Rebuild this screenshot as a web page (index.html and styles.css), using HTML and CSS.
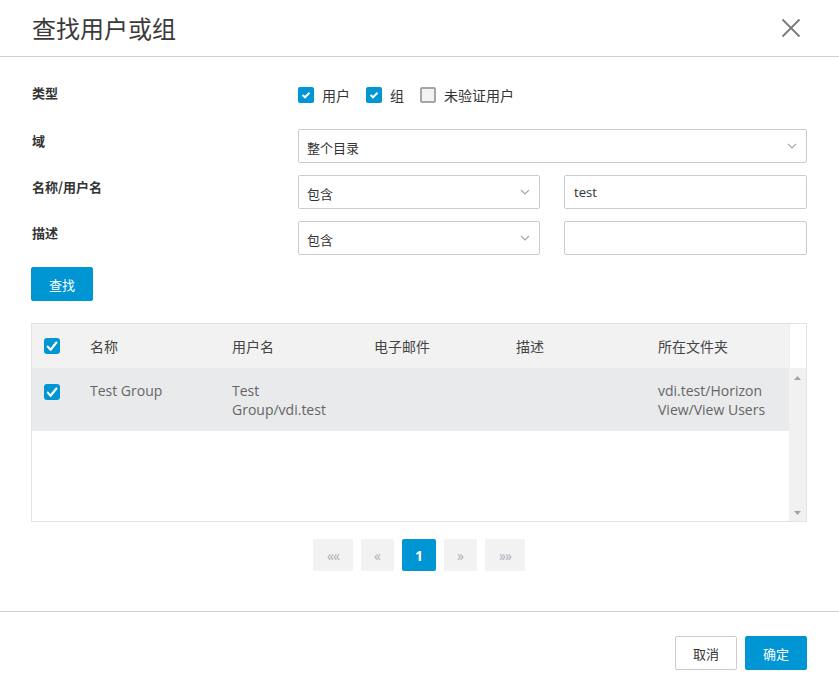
FILE: index.html
```html
<!DOCTYPE html>
<html lang="zh">
<head>
<meta charset="utf-8">
<link rel="stylesheet" href="styles.css">
</head>
<body>
<div class="dialog">
  <div class="header">
    <h1 class="title">查找用户或组</h1>
    <svg class="close" width="20" height="20" viewBox="0 0 20 20"><path d="M1.5 1.5 L18.5 18.5 M18.5 1.5 L1.5 18.5" stroke="#7a7a7a" stroke-width="1.8" fill="none"/></svg>
  </div>
  <div class="body">
    <div class="form">
      <div class="row row-type">
        <div class="label">类型</div>
        <div class="control checks">
          <label class="check"><span class="box on"><svg width="10" height="8" viewBox="0 0 10 8"><path d="M1.5 4 L4 6.3 L8.5 1.8" stroke="#fff" stroke-width="2" fill="none"/></svg></span>用户</label>
          <label class="check"><span class="box on"><svg width="10" height="8" viewBox="0 0 10 8"><path d="M1.5 4 L4 6.3 L8.5 1.8" stroke="#fff" stroke-width="2" fill="none"/></svg></span>组</label>
          <label class="check"><span class="box off"></span>未验证用户</label>
        </div>
      </div>
      <div class="row">
        <div class="label">域</div>
        <div class="control">
          <div class="select full"><span>整个目录</span><svg width="10" height="6" viewBox="0 0 10 6"><path d="M1 1 L5 5 L9 1" stroke="#a0a8b4" stroke-width="1.2" fill="none"/></svg></div>
        </div>
      </div>
      <div class="row">
        <div class="label">名称/用户名</div>
        <div class="control pair">
          <div class="select"><span>包含</span><svg width="10" height="6" viewBox="0 0 10 6"><path d="M1 1 L5 5 L9 1" stroke="#a0a8b4" stroke-width="1.2" fill="none"/></svg></div>
          <div class="input">test</div>
        </div>
      </div>
      <div class="row">
        <div class="label">描述</div>
        <div class="control pair">
          <div class="select"><span>包含</span><svg width="10" height="6" viewBox="0 0 10 6"><path d="M1 1 L5 5 L9 1" stroke="#a0a8b4" stroke-width="1.2" fill="none"/></svg></div>
          <div class="input"></div>
        </div>
      </div>
    </div>
    <button class="btn primary find">查找</button>

    <div class="table">
      <div class="thead">
        <div class="tr">
          <div class="cell chk"><span class="tbox"><svg width="12" height="11" viewBox="0 0 12 11"><path d="M1.8 5.6 L4.6 8.8 L10.4 1.5" stroke="#fff" stroke-width="2.2" fill="none" stroke-linecap="round" stroke-linejoin="round"/></svg></span></div>
          <div class="cell">名称</div>
          <div class="cell">用户名</div>
          <div class="cell">电子邮件</div>
          <div class="cell">描述</div>
          <div class="cell">所在文件夹</div>
        </div>
        <div class="sb-head"></div>
      </div>
      <div class="tbody">
        <div class="rows">
          <div class="tr data">
            <div class="cell chk"><span class="tbox"><svg width="12" height="11" viewBox="0 0 12 11"><path d="M1.8 5.6 L4.6 8.8 L10.4 1.5" stroke="#fff" stroke-width="2.2" fill="none" stroke-linecap="round" stroke-linejoin="round"/></svg></span></div>
            <div class="cell">Test Group</div>
            <div class="cell">Test<br>Group/vdi.test</div>
            <div class="cell"></div>
            <div class="cell"></div>
            <div class="cell">vdi.test/Horizon<br>View/View Users</div>
          </div>
        </div>
        <div class="scrollbar">
          <svg width="7" height="4" viewBox="0 0 7 4"><path d="M0 4 L3.5 0 L7 4 Z" fill="#a3a3a3"/></svg>
          <svg width="7" height="4" viewBox="0 0 7 4"><path d="M0 0 L3.5 4 L7 0 Z" fill="#a3a3a3"/></svg>
        </div>
      </div>
    </div>

    <div class="pager">
      <span class="pg wide">««</span>
      <span class="pg">«</span>
      <span class="pg active">1</span>
      <span class="pg">»</span>
      <span class="pg wide">»»</span>
    </div>
  </div>
  <div class="footer">
    <button class="btn secondary">取消</button>
    <button class="btn primary">确定</button>
  </div>
</div>
</body>
</html>
```

FILE: styles.css
```css
* { box-sizing: border-box; }
html, body { margin: 0; padding: 0; background: #fff; }
body {
  font-family: "Open Sans", "Noto Sans CJK SC", sans-serif;
  color: #333;
  font-size: 13px;
}
.dialog { width: 839px; height: 693px; display: flex; flex-direction: column; }
.header {
  height: 57px;
  border-bottom: 1px solid #cfcfcf;
  display: flex;
  align-items: center;
  justify-content: space-between;
  padding: 0 38px 1px 32px;
}
.title {
  margin: 0;
  font-size: 24px;
  font-weight: 400;
  color: #3a3a3a;
  font-family: "Noto Sans CJK SC", sans-serif;
  line-height: 32px;
}
.close { display: block; }
.body { padding: 24px 32px 0 31px; }
.form { display: flex; flex-direction: column; gap: 12px; padding-left: 1px; }
.row { display: flex; height: 34px; }
.row-type { height: 28px; margin-bottom: 8px; }
.label {
  width: 266px;
  flex: none;
  font-weight: 700;
  font-size: 13px;
  line-height: 24px;
  color: #333;
  font-family: "Noto Sans CJK SC", sans-serif;
}
.control { flex: 1; display: flex; }
.checks { align-items: center; gap: 0; }
.check { display: flex; align-items: center; margin-right: 16px; font-family: "Noto Sans CJK SC", sans-serif; font-size: 14px; color: #333; }
.box {
  width: 16px; height: 16px; border-radius: 2px; margin-right: 8px;
  display: flex; align-items: center; justify-content: center;
}
.box.on { background: #0095d3; }
.box.off { background: #f2f2f2; border: 2px solid #a6a6a6; }
.select, .input {
  height: 34px;
  border: 1px solid #cccccc;
  border-radius: 2px;
  display: flex;
  align-items: center;
  padding: 0 8px;
  font-size: 13px;
  color: #333;
}
.select { justify-content: space-between; padding-right: 9px; }
.select span { font-family: "Noto Sans CJK SC", sans-serif; padding-top: 2px; }
.select.full { width: 509px; }
.pair { gap: 24px; }
.pair .select { width: 242px; }
.pair .input { width: 243px; padding-left: 9px; }
.btn {
  height: 34px;
  width: 62px;
  border-radius: 2px;
  font-family: "Noto Sans CJK SC", sans-serif;
  font-size: 13px;
  cursor: pointer;
  padding: 0;
}
.btn.primary { background: #0095d3; color: #fff; border: 1px solid #0095d3; }
.btn.secondary { background: #fff; color: #333; border: 1px solid #cccccc; }
.find { margin-top: 12px; display: block; }

.table {
  margin-top: 22px;
  width: 776px;
  height: 199px;
  border: 1px solid #e3e3e3;
  display: flex;
  flex-direction: column;
}
.thead { display: flex; height: 44px; flex: none; }
.thead .tr { background: #f2f2f2; flex: 1; align-items: center; }
.sb-head { width: 17px; background: #fff; border-left: 1px solid #ededed; }
.tr { display: flex; }
.cell {
  width: 142px;
  padding-left: 12px;
  color: #555;
  font-size: 14px;
  line-height: 19px;
  font-family: "Open Sans", "Noto Sans CJK SC", sans-serif;
}
.thead .cell { color: #444; font-size: 14px; }
.cell.chk { width: 46px; padding-left: 12px; display: flex; }
.tbox {
  width: 16px; height: 16px; border-radius: 3px; background: #0095d3;
  display: flex; align-items: center; justify-content: center;
}
.tbody { flex: 1; display: flex; }
.rows { flex: 1; }
.tr.data { background: #e9eaeb; height: 63px; padding-top: 13px; }
.tr.data .cell { color: #666; }
.tr.data .cell.chk { padding-top: 3px; }
.scrollbar {
  width: 17px;
  background: #f1f1f1;
  display: flex;
  flex-direction: column;
  justify-content: space-between;
  align-items: center;
  padding: 8px 0 6px;
}
.scrollbar svg { display: block; }

.pager {
  margin-top: 17px;
  display: flex;
  justify-content: center;
  gap: 8px;
}
.pg {
  height: 32px;
  width: 33px;
  background: #f2f2f2;
  border-radius: 2px;
  color: #a9b0b9;
  font-size: 14px;
  display: flex;
  align-items: center;
  justify-content: center;
  font-family: "Open Sans", sans-serif;
}
.pg.wide { width: 40px; letter-spacing: -1px; }
.pg.active { background: #0095d3; color: #fff; font-weight: 700; width: 34px; font-family: "Open Sans", sans-serif; font-size: 14px; }
.footer {
  margin-top: auto;
  border-top: 1px solid #cfcfcf;
  height: 82px;
  display: flex;
  justify-content: flex-end;
  align-items: flex-start;
  gap: 8px;
  padding: 24px 32px 0 0;
}
```
